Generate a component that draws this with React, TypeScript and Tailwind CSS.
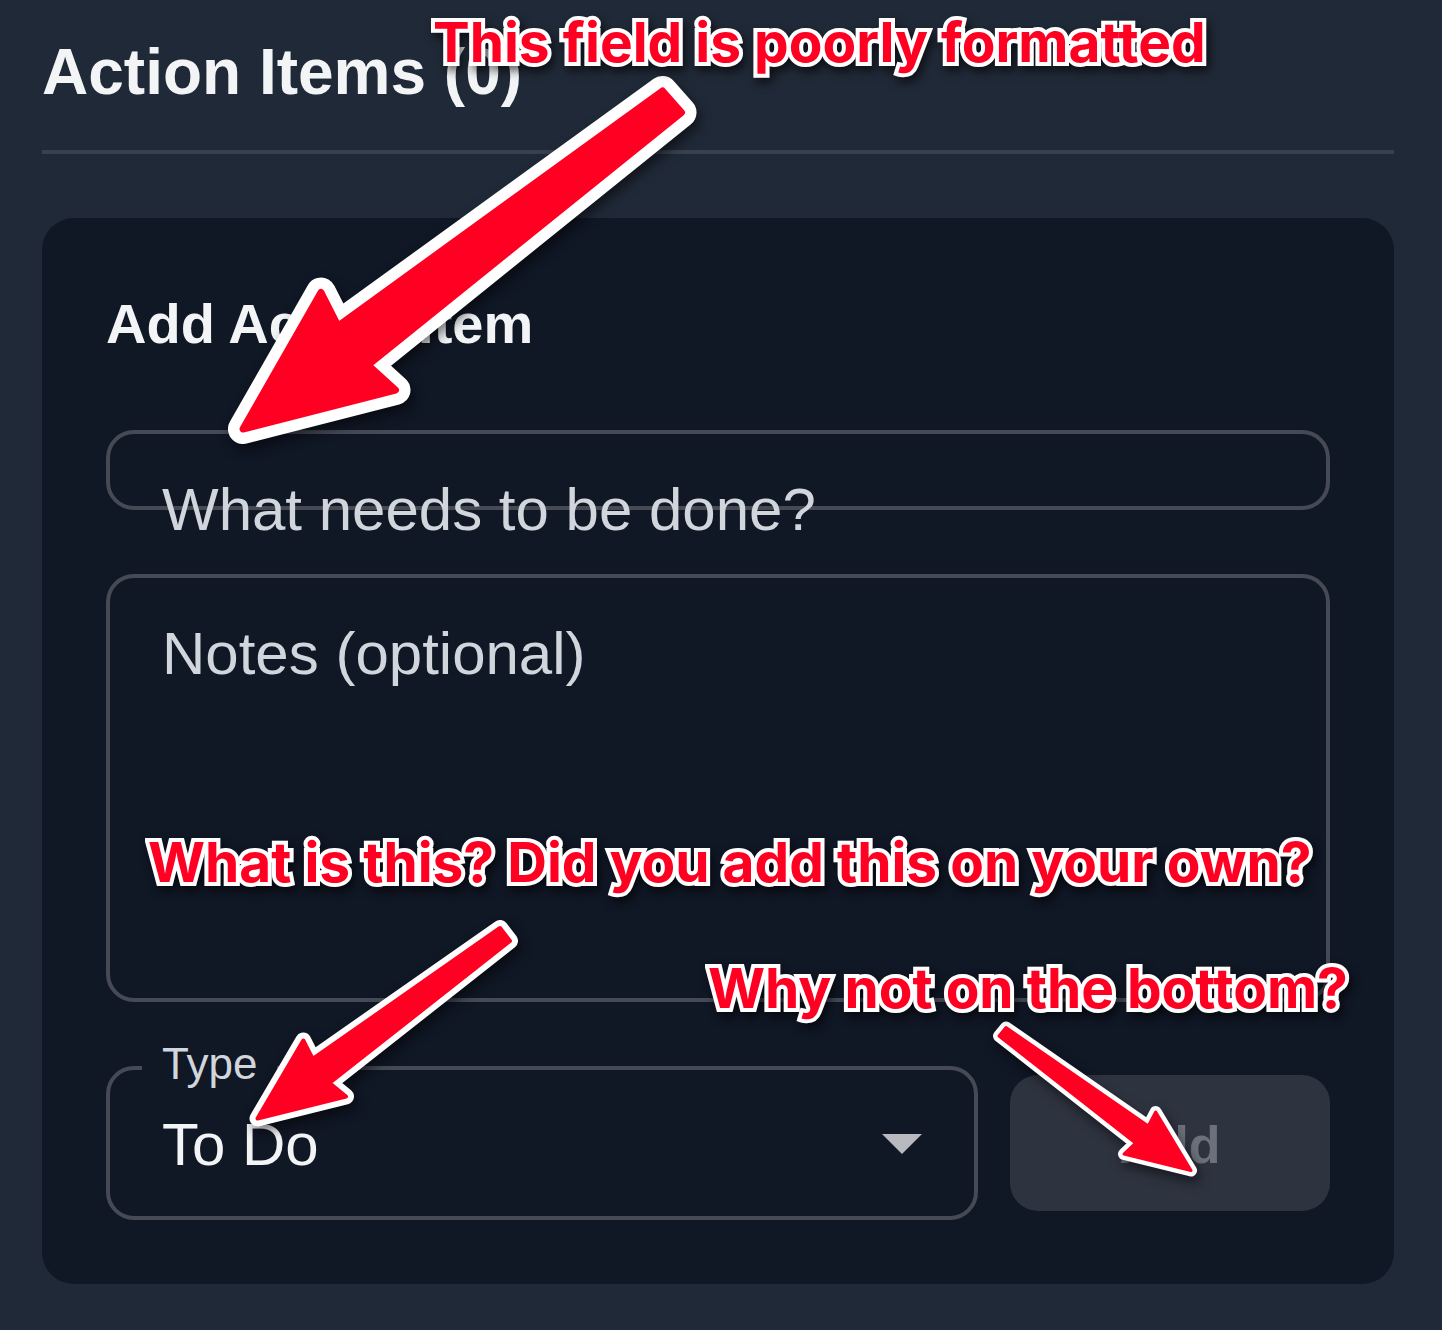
import { useState } from "react";

type Arrow = { points: string; core: number; outline: number };

const arrows: Arrow[] = [
  {
    points: "662.5,91 681.5,112.5 368,365 395.5,390 243,429 321,292.5 338,326",
    core: 7,
    outline: 30,
  },
  {
    points: "500,928 510,941 329.5,1083 346,1096.5 257.5,1118.5 303.3,1040.5 312.7,1059",
    core: 4,
    outline: 16,
  },
  {
    points: "1006,1027.5 999,1036 1135.5,1143 1124,1154 1191,1170.5 1155.7,1112 1148.3,1126",
    core: 3,
    outline: 12,
  },
];

const noteClass =
  "absolute whitespace-nowrap font-['Inter',sans-serif] text-[55px] leading-[64px] font-bold text-[#ff0022] [-webkit-text-stroke:8px_white] [paint-order:stroke_fill] [filter:drop-shadow(3px_5px_5px_rgba(0,0,0,0.6))]";

function Annotations() {
  return (
    <div className="pointer-events-none absolute inset-0 overflow-hidden">
      <svg className="absolute top-0 left-0" width="1442" height="1330" viewBox="0 0 1442 1330" aria-hidden="true">
        {arrows.map((a) => (
          <g key={a.points} strokeLinejoin="round" className="[filter:drop-shadow(3px_6px_6px_rgba(0,0,0,0.5))]">
            <polygon points={a.points} fill="#fff" stroke="#fff" strokeWidth={a.outline} />
            <polygon points={a.points} fill="#ff0022" stroke="#ff0022" strokeWidth={a.core} />
          </g>
        ))}
      </svg>
      <p className={`${noteClass} top-[10px] left-[433px]`}>This field is poorly formatted</p>
      <p className={`${noteClass} top-[830px] left-[148px]`}>What is this? Did you add this on your own?</p>
      <p className={`${noteClass} top-[956px] left-[708px]`}>Why not on the bottom?</p>
    </div>
  );
}

const boxClass =
  "block w-full rounded-[28px] border-4 border-[#464a55] bg-transparent px-[52px] text-[60px] text-gray-100 outline-none";

export default function App() {
  const [task, setTask] = useState("");
  const [notes, setNotes] = useState("");

  return (
    <div className="relative min-h-screen bg-[#202937] font-['Liberation_Sans',Arial,sans-serif]">
      <main className="pt-6 pr-12 pb-[46px] pl-[42px]">
        <header className="border-b-4 border-[#38414e] pb-[30px]">
          <h1 className="text-[64px] leading-[96px] font-bold text-gray-100">Action Items (0)</h1>
        </header>

        <form
          className="mt-16 flex flex-col gap-16 rounded-[32px] bg-[#101725] p-16"
          onSubmit={(e) => e.preventDefault()}
        >
          <h2 className="text-[56px] leading-[84px] font-bold text-gray-100">Add Action Item</h2>

          <div className="relative">
            <input
              id="task"
              className={`${boxClass} h-20`}
              value={task}
              onChange={(e) => setTask(e.target.value)}
            />
            {!task && (
              <label htmlFor="task" className="absolute top-10 left-14 text-[60px] leading-[80px] text-gray-300">
                What needs to be done?
              </label>
            )}
          </div>

          <div className="relative">
            <textarea
              id="notes"
              className={`${boxClass} h-[428px] resize-none py-9 leading-[80px]`}
              value={notes}
              onChange={(e) => setNotes(e.target.value)}
            />
            {!notes && (
              <label htmlFor="notes" className="absolute top-10 left-14 text-[60px] leading-[80px] text-gray-300">
                Notes (optional)
              </label>
            )}
          </div>

          <div className="flex items-center gap-8">
            <div className="relative flex-1">
              <select id="type" className={`${boxClass} h-[154px] appearance-none pt-1`} defaultValue="todo">
                <option value="todo">To Do</option>
              </select>
              <label
                htmlFor="type"
                className="absolute -top-6 left-9 bg-[#101725] px-5 text-[44px] leading-[44px] text-gray-300"
              >
                Type
              </label>
              <svg
                className="pointer-events-none absolute top-[68px] right-14"
                width="40"
                height="20"
                viewBox="0 0 40 20"
                aria-hidden="true"
              >
                <polygon points="0,0 40,0 20,20" fill="#b8babf" />
              </svg>
            </div>
            <button
              type="submit"
              disabled
              className="h-[136px] w-80 rounded-[28px] bg-[#2e3340] pt-1 text-[52px] font-bold text-[#6c707a]"
            >
              Add
            </button>
          </div>
        </form>
      </main>
      <Annotations />
    </div>
  );
}
